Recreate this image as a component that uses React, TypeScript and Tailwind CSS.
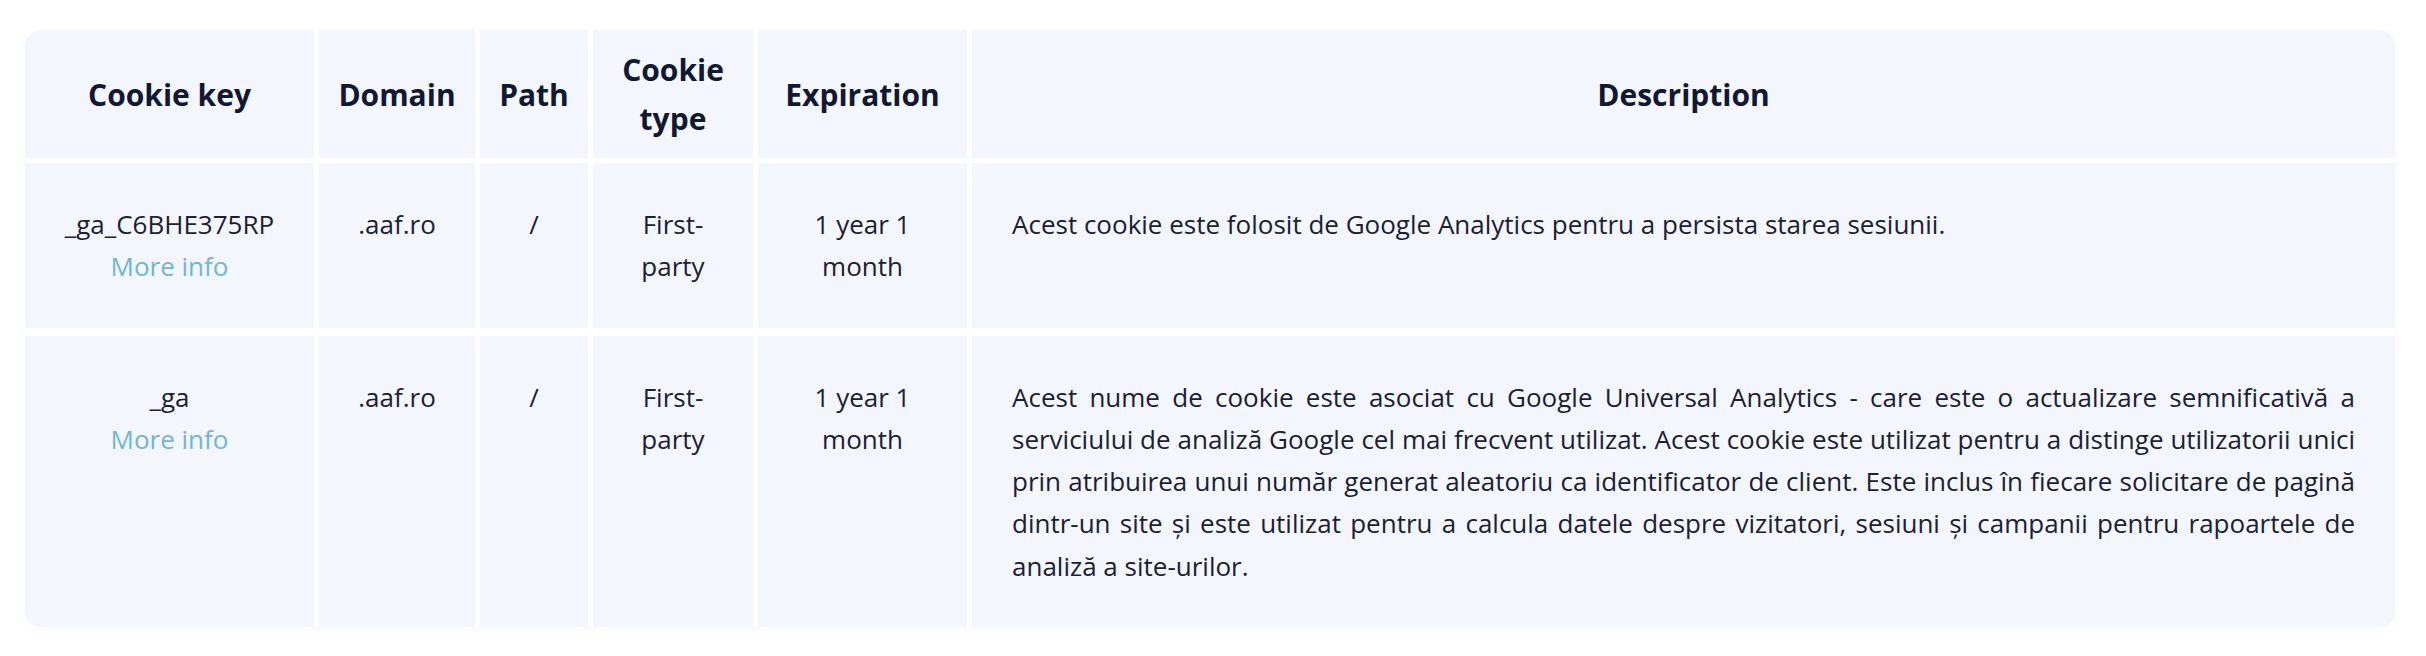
const rows = [
  {
    key: '_ga_C6BHE375RP',
    domain: '.aaf.ro',
    path: '/',
    type: 'First-party',
    expiration: '1 year 1 month',
    description: 'Acest cookie este folosit de Google Analytics pentru a persista starea sesiunii.',
  },
  {
    key: '_ga',
    domain: '.aaf.ro',
    path: '/',
    type: 'First-party',
    expiration: '1 year 1 month',
    description:
      'Acest nume de cookie este asociat cu Google Universal Analytics - care este o actualizare semnificativă a serviciului de analiză Google cel mai frecvent utilizat. Acest cookie este utilizat pentru a distinge utilizatorii unici prin atribuirea unui număr generat aleatoriu ca identificator de client. Este inclus în fiecare solicitare de pagină dintr-un site și este utilizat pentru a calcula datele despre vizitatori, sesiuni și campanii pentru rapoartele de analiză a site-urilor.',
  },
];

const headers = ['Cookie key', 'Domain', 'Path', 'Cookie type', 'Expiration', 'Description'];

export default function App() {
  return (
    <div className="bg-white min-h-screen pt-[30px] pl-[25px] font-['Open_Sans',sans-serif]">
      <div className="w-[2370px] rounded-2xl overflow-hidden bg-white shadow-[0_2px_12px_rgba(0,0,0,0.035)]">
        <div className="grid grid-cols-[289px_156px_108px_160px_209px_1fr] gap-x-[5px] gap-y-[5px]">
          {headers.map((h) => (
            <div
              key={h}
              className="bg-[#f3f7fd] h-[128px] px-[10px] flex items-center justify-center text-center text-[30px] leading-[49px] font-bold text-[#111833]"
            >
              {h}
            </div>
          ))}

          {rows.map((r, i) => {
            const top = i > 0 ? 'mt-[3px]' : '';
            return [
              <div key={`k${i}`} className={`${top} bg-[#f3f7fd] px-[20px] py-[40px] text-center text-[26px] leading-[42.3px] text-[#1b2035]`}>
                <div>{r.key}</div>
                <a className="block text-[#6fb5d9] cursor-pointer">More info</a>
              </div>,
              <div key={`d${i}`} className={`${top} bg-[#f3f7fd] px-[20px] py-[40px] text-center text-[26px] leading-[42.3px] text-[#1b2035]`}>
                {r.domain}
              </div>,
              <div key={`p${i}`} className={`${top} bg-[#f3f7fd] px-[20px] py-[40px] text-center text-[26px] leading-[42.3px] text-[#1b2035]`}>
                {r.path}
              </div>,
              <div key={`t${i}`} className={`${top} bg-[#f3f7fd] px-[40px] py-[40px] text-center text-[26px] leading-[42.3px] text-[#1b2035]`}>
                {r.type}
              </div>,
              <div key={`e${i}`} className={`${top} bg-[#f3f7fd] px-[40px] py-[40px] text-center text-[26px] leading-[42.3px] text-[#1b2035]`}>
                {r.expiration}
              </div>,
              <div key={`s${i}`} className={`${top} bg-[#f3f7fd] px-[40px] py-[40px] text-justify text-[26px] leading-[42.3px] text-[#1b2035]`}>
                {r.description}
              </div>,
            ];
          })}
        </div>
      </div>
    </div>
  );
}
